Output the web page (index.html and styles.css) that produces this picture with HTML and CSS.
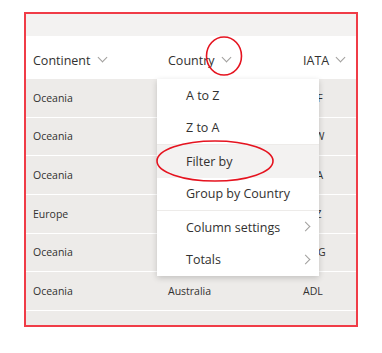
FILE: index.html
```html
<html>
<head>
<link rel="stylesheet" href="styles.css">
<title>Airports list</title>
</head>
<body>
<div class=frame>
	<div class=topbar></div>
	<div class="row head">
		<div class=cell>Continent <span class=chev></span></div>
		<div class=cell>Country <span class=chev></span></div>
		<div class=cell>IATA <span class=chev></span></div>
	</div>
	<div class=row><div class=cell>Oceania</div><div class=cell></div><div class=cell>CHF</div></div>
	<div class=row><div class=cell>Oceania</div><div class=cell></div><div class=cell>SYW</div></div>
	<div class=row><div class=cell>Oceania</div><div class=cell></div><div class=cell>CBA</div></div>
	<div class=row><div class=cell>Europe</div><div class=cell></div><div class=cell>ZRZ</div></div>
	<div class=row><div class=cell>Oceania</div><div class=cell></div><div class=cell>MLG</div></div>
	<div class=row><div class=cell>Oceania</div><div class=cell>Australia</div><div class=cell>ADL</div></div>
	<div class=row></div>
</div>

<!-- column menu -->
<div class=menu>
	<div class=item>A to Z</div>
	<div class=item>Z to A</div>
	<div class=divider></div>
	<div class="item hover">Filter by</div>
	<div class=item>Group by Country</div>
	<div class=divider></div>
	<div class=item>Column settings <span class=sub></span></div>
	<div class=item>Totals <span class=sub></span></div>
</div>

<svg class=marks width="382" height="353">
	<ellipse cx="224" cy="56" rx="17.5" ry="19" />
	<ellipse cx="215" cy="161" rx="58" ry="20" />
</svg>
</body>
</html>
```
FILE: styles.css
```css
body{margin:0; background:#fff; font-family:"Open Sans", "Noto Sans", sans-serif; color:#323130;}
.frame{margin:12px 0 0 24px; width:330px; height:311px; border:2px solid #f03c47; background:#edebe9; overflow:hidden;}
.topbar{height:22px; background:#f3f2f1;}

.row{display:grid; grid-template-columns:135px 135px 1fr; padding-left:7px; height:37.67px; border-bottom:1px solid #fff; align-items:center; font-size:10.5px;}
.head{height:43px; box-sizing:border-box; padding-top:5px; border:0; background:#fff; font-size:12.5px;}
.cell{white-space:nowrap;}

.chev{display:inline-block; width:6px; height:6px; border-right:1px solid #a19f9d; border-bottom:1px solid #a19f9d; transform:rotate(45deg); margin:0 0 4px 5px;}

.menu{position:absolute; left:157px; top:79px; width:162px; background:#fff; box-shadow:0 2px 6px rgba(0,0,0,.18);}
.item{height:32.5px; display:flex; align-items:center; padding-left:29px; font-size:12.5px; position:relative;}
.hover{background:#f3f2f1;}
.divider{height:1px; background:#edebe9;}
.sub{position:absolute; left:145px; top:12px; width:6px; height:6px; border-right:1px solid #a19f9d; border-top:1px solid #a19f9d; transform:rotate(45deg);}

.marks{position:absolute; left:0; top:0; pointer-events:none;}
.marks ellipse{fill:none; stroke:#e5131f; stroke-width:1.6;}
```
